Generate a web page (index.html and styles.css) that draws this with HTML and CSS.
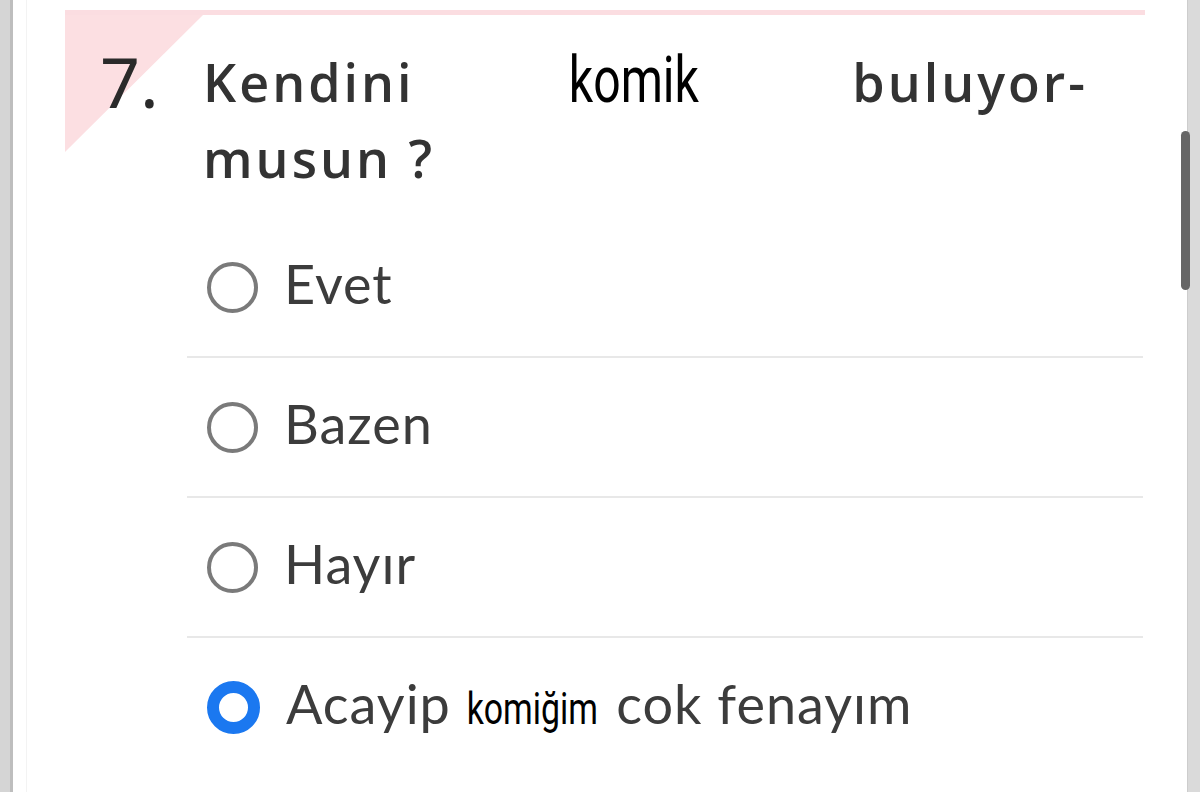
FILE: index.html
```html
<!DOCTYPE html>
<html lang="tr">
  <head>
    <meta charset="UTF-8" />
    <meta name="viewport" content="width=device-width, initial-scale=1.0" />
    <title>Soru 7</title>
    <link rel="stylesheet" href="styles.css">
  </head>
  <body>
    <div class="screen">
      <div class="edge edge-left"></div>
      <div class="sheet">
        <div class="card">
          <div class="question">
            <div class="q-num">7.</div>
            <div class="q-text">
              <div class="q-line q-line-first">
                <span>Kendini</span>
                <span class="sticker sticker-big">komik</span>
                <span>buluyor-</span>
              </div>
              <div class="q-line">musun ?</div>
            </div>
          </div>
          <ul class="options">
            <li class="option"><span class="radio"></span><span class="label">Evet</span></li>
            <li class="option"><span class="radio"></span><span class="label">Bazen</span></li>
            <li class="option"><span class="radio"></span><span class="label">Hayır</span></li>
            <li class="option"><span class="radio checked"></span><span class="label">Acayip <span class="sticker sticker-small">komiğim</span> cok fenayım</span></li>
          </ul>
        </div>
      </div>
      <div class="edge edge-right"></div>
      <div class="scroll-thumb"></div>
    </div>
  </body>
</html>
```

FILE: styles.css
```css
body {
  margin: 0;
  background: #fff;
  overflow: hidden;
}

.screen {
  display: flex;
  height: 792px;
  position: relative;
}

.edge {
  flex: none;
  width: 13px;
}

.edge-left {
  background: linear-gradient(to right, #d5d5d5 0 10px, #bebebe 10px 13px);
}

.edge-right {
  background: #dadada;
  border-left: 1px solid #cdcdcd;
  width: 12px;
}

.sheet {
  flex: 1;
  margin-left: 13px;
  border-left: 1px solid #f3f3f3;
  padding: 10px 42px 0 38px;
}

.card {
  position: relative;
  border-top: 5px solid #fbdde1;
}

.card::before {
  content: "";
  position: absolute;
  top: 0;
  left: 0;
  width: 138px;
  height: 137px;
  background: #fcdfe2;
  clip-path: polygon(0 0, 100% 0, 0 100%);
}

.question {
  position: relative;
  z-index: 1;
  display: flex;
  padding: 29px 57px 0 35px;
  font-family: "Open Sans", "Noto Sans", sans-serif;
  color: #333;
}

.q-num {
  flex: none;
  width: 103px;
  font-family: "Noto Sans", sans-serif;
  font-size: 70px;
  line-height: 70px;
  margin-top: 2px;
  color: #2a2a2a;
}

.q-text {
  flex: 1;
  font-size: 52px;
  font-weight: 600;
  letter-spacing: 3px;
}

.q-line {
  line-height: 76px;
}

.q-line-first {
  display: flex;
  justify-content: space-between;
  align-items: baseline;
}

.sticker {
  display: inline-block;
  font-family: Roboto, "Liberation Sans", sans-serif;
  font-weight: 400;
  color: #000;
  letter-spacing: 0;
  transform: scaleX(0.74);
}

.sticker-big {
  font-size: 65px;
  margin-top: -4px;
}

.sticker-small {
  font-size: 44px;
  margin: 0 -16px 0 -19px;
  transform: scaleX(0.77);
}

.options {
  list-style: none;
  margin: 22px 2px 0 122px;
  padding: 0;
  font-family: Lato, "Noto Sans", sans-serif;
  font-size: 54px;
  letter-spacing: 1px;
  color: #3c3c3c;
}

.option {
  display: flex;
  align-items: center;
  height: 138px;
  border-bottom: 2px solid #e8e8e8;
}

.option:last-child {
  border-bottom: none;
}

.radio {
  flex: none;
  box-sizing: border-box;
  width: 51px;
  height: 51px;
  margin: 0 26px 0 20px;
  border: 4px solid #7a7a7a;
  border-radius: 50%;
}

.radio.checked {
  width: 53px;
  height: 53px;
  border: 12px solid #1b78f0;
  background: #fff;
}

.label {
  margin-bottom: 8px;
  white-space: nowrap;
}

.scroll-thumb {
  position: absolute;
  left: 1181px;
  top: 131px;
  width: 9px;
  height: 159px;
  border-radius: 5px;
  background: #666;
}
```
